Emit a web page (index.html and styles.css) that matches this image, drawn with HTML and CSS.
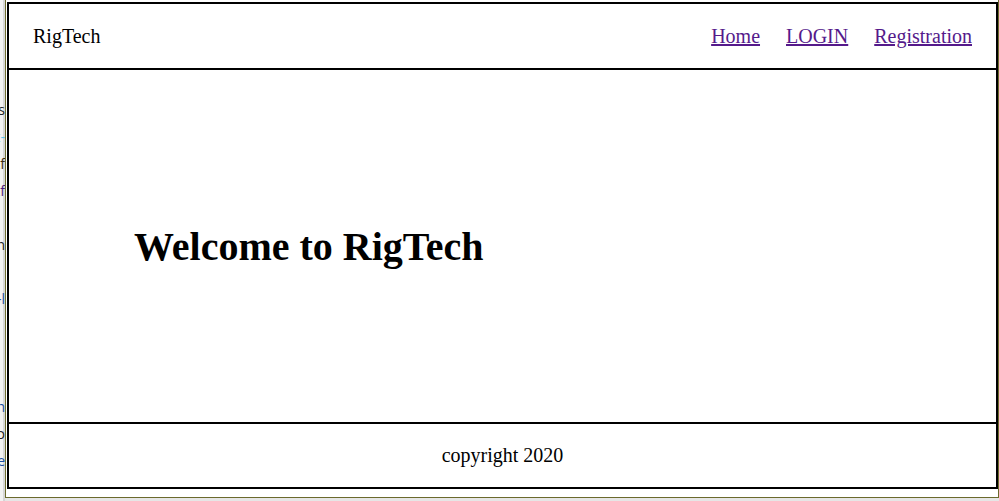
FILE: index.html
```html
<!DOCTYPE html>
<html lang="en">
<head>
<meta charset="utf-8">
<title>RigTech</title>
<link rel="stylesheet" href="styles.css">
</head>
<body>
  <div class="bg-strip" aria-hidden="true">
    <span class="l-dark">xs</span>
    <span class="l-cyan">x-</span>
    <span class="l-brown">xf</span>
    <span class="l-purple">xf</span>
    <span class="l-empty">&nbsp;</span>
    <span class="l-dark">xn</span>
    <span class="l-empty">&nbsp;</span>
    <span class="l-blue">x-l</span>
    <span class="l-empty">&nbsp;</span>
    <span class="l-empty">&nbsp;</span>
    <span class="l-empty">&nbsp;</span>
    <span class="l-blue">xh</span>
    <span class="l-dark">xo</span>
    <span class="l-blue">xe</span>
  </div>
  <div class="frame">
    <div class="page">
      <header class="site-header">
        <div class="brand">RigTech</div>
        <nav class="nav">
          <a href="#" class="nav-link">Home</a>
          <a href="#" class="nav-link">LOGIN</a>
          <a href="#" class="nav-link">Registration</a>
        </nav>
      </header>
      <main class="hero">
        <h1 class="hero-title">Welcome to RigTech</h1>
      </main>
      <footer class="site-footer">copyright 2020</footer>
    </div>
  </div>
</body>
</html>
```

FILE: styles.css
```css
html, body {
  margin: 0;
  padding: 0;
}

body {
  display: flex;
  height: 501px;
  overflow: hidden;
  background: #e6e6e6;
  font-family: "Liberation Serif", "Times New Roman", serif;
  color: #000;
}

.bg-strip {
  width: 5px;
  flex: 0 0 5px;
  overflow: hidden;
  padding-top: 96px;
  display: flex;
  flex-direction: column;
  align-items: flex-end;
  font: 14px/27px "Open Sans", sans-serif;
  background: linear-gradient(to right, #f2f2f2 0, #f2f2f2 3px, #d6d6d6 3px, #d6d6d6 5px);
}

.bg-strip span {
  white-space: nowrap;
}

.l-dark { color: #222; }
.l-cyan { color: #5ec4f0; }
.l-brown { color: #3a2a10; }
.l-purple { color: #4b1a7a; }
.l-blue { color: #1c4fa0; }

.frame {
  width: 992px;
  height: 495px;
  padding-top: 2px;
  background: #fff;
  border-left: 1px solid #6b6a2c;
  border-right: 1px solid #6b6a2c;
  border-bottom: 1px solid #6b6a2c;
  flex: 0 0 auto;
}

.page {
  margin-left: 1px;
  height: 487px;
  box-sizing: border-box;
  border: 2px solid #000;
  display: flex;
  flex-direction: column;
}

.site-header {
  height: 64px;
  flex: 0 0 auto;
  display: flex;
  align-items: center;
  justify-content: space-between;
  padding: 1px 24px 0 24px;
  box-sizing: border-box;
  border-bottom: 2px solid #000;
  font-size: 20px;
}

.site-header {
  height: 66px;
}

.nav {
  display: flex;
  gap: 26px;
}

.nav-link {
  color: #551a8b;
  text-decoration: underline;
}

.hero {
  flex: 1;
  display: flex;
  align-items: center;
  padding-left: 125px;
}

.hero-title {
  margin: 0;
  font-size: 40px;
  font-weight: bold;
}

.site-footer {
  height: 63px;
  flex: 0 0 auto;
  display: flex;
  align-items: center;
  justify-content: center;
  border-top: 2px solid #000;
  font-size: 20px;
}
```
